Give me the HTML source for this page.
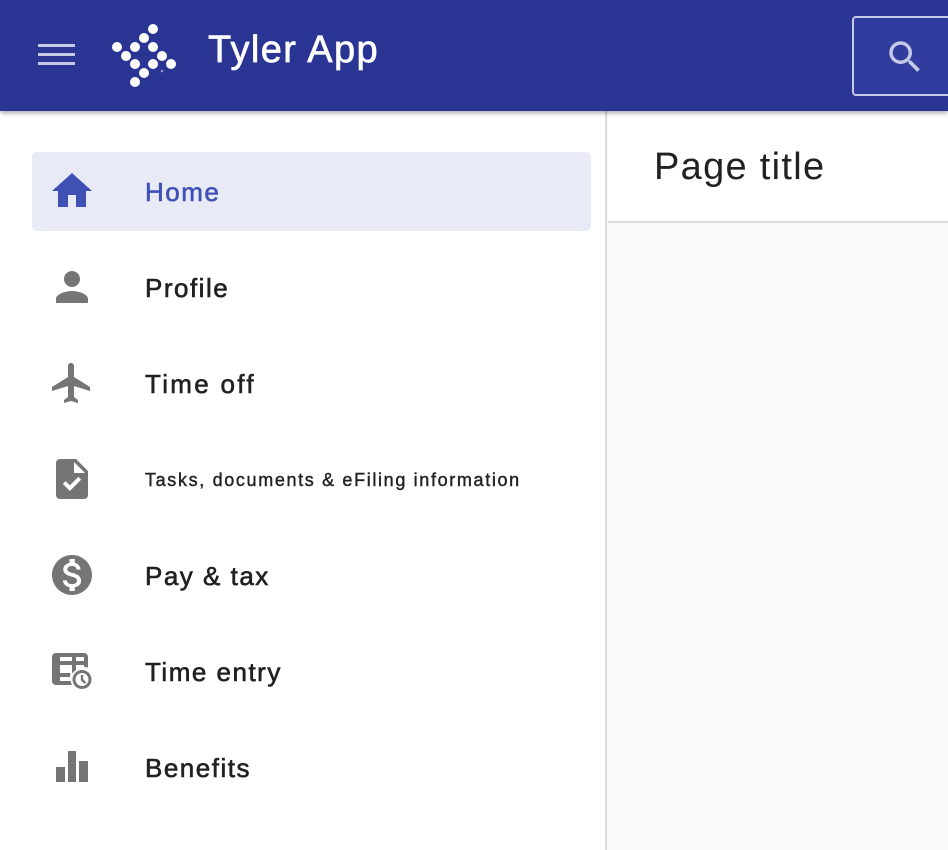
<!DOCTYPE html>
<html><head><meta charset="utf-8"><style>
*{margin:0;padding:0;box-sizing:border-box}
body{width:948px;height:850px;overflow:hidden;background:#fafafa;font-family:"Liberation Sans",Arial,sans-serif;position:relative}
.hdr{position:absolute;left:0;top:0;width:948px;height:111px;background:#2a3593;box-shadow:0 2px 5px rgba(0,0,0,.35);z-index:2}
.side{position:absolute;left:0;top:111px;width:607px;height:739px;background:#fff;border-right:2px solid #dcdcdc}
.main{position:absolute;left:608px;top:111px;width:340px;height:112px;background:#fff;border-bottom:2px solid #dcdcdc}
.item{position:absolute;left:32px;width:559px;height:79px;border-radius:5px}
.item svg{position:absolute;left:16px;top:15px;width:48px;height:48px;fill:#757575}
.item span{position:absolute;left:113px;top:50%;transform:translateY(-48%);font-size:26px;color:#212121;letter-spacing:1.5px;white-space:nowrap;-webkit-text-stroke:0.6px #212121}
.sel{background:#e8eaf6}
.sel svg{fill:#3f51b5}
.sel span{color:#3f51b5;-webkit-text-stroke-color:#3f51b5}
</style></head><body>
<div class="hdr">
  <svg style="position:absolute;left:38px;top:44px" width="37" height="22"><rect y="0" width="37" height="3" fill="#c5c9e6"/><rect y="9" width="37" height="3" fill="#c5c9e6"/><rect y="18" width="37" height="3" fill="#c5c9e6"/></svg>
  <svg style="position:absolute;left:0;top:0" width="200" height="111" fill="#fff">
    <circle cx="153" cy="29" r="5"/><circle cx="144" cy="38" r="5"/><circle cx="153" cy="47" r="5"/><circle cx="135" cy="47" r="5"/><circle cx="117" cy="47" r="5"/><circle cx="126" cy="56" r="5"/><circle cx="162" cy="56" r="5"/><circle cx="135" cy="64" r="5"/><circle cx="153" cy="64" r="5"/><circle cx="171" cy="64" r="5"/><circle cx="144" cy="73" r="5"/><circle cx="135" cy="82" r="5"/><circle cx="162" cy="71" r="1.3" fill="#8e95c9"/>
  </svg>
  <div style="position:absolute;left:208px;top:29px;color:#fff;font-size:38px;letter-spacing:1.4px;-webkit-text-stroke:0.7px #fff">Tyler App</div>
  <div style="position:absolute;left:852px;top:16px;width:120px;height:80px;background:#313d9e;border:2px solid #c5c9e6;border-radius:4px">
    <svg style="position:absolute;left:30px;top:18px" width="42" height="42" viewBox="0 0 24 24" fill="#c5c9e6"><path d="M15.5 14h-.79l-.28-.27A6.47 6.47 0 0 0 16 9.5 6.5 6.5 0 1 0 9.5 16c1.61 0 3.09-.59 4.23-1.57l.27.28v.79l5 4.99L20.49 19l-4.99-5zm-6 0C7.01 14 5 11.99 5 9.5S7.01 5 9.5 5 14 7.01 14 9.5 11.99 14 9.5 14z"/></svg>
  </div>
</div>
<div class="side">
  <div class="item sel" style="top:41px"><svg viewBox="0 0 24 24"><path d="M10 20v-6h4v6h5v-8h3L12 3 2 12h3v8z"/></svg><span>Home</span></div>
  <div class="item" style="top:137px"><svg viewBox="0 0 24 24"><path d="M12 12c2.21 0 4-1.79 4-4s-1.79-4-4-4-4 1.79-4 4 1.79 4 4 4zm0 2c-2.67 0-8 1.34-8 4v2h16v-2c0-2.66-5.33-4-8-4z"/></svg><span>Profile</span></div>
  <div class="item" style="top:233px"><svg viewBox="0 0 24 24"><path d="M21 16v-2l-8-5V3.5c0-.83-.67-1.5-1.5-1.5S10 2.67 10 3.5V9l-8 5v2l8-2.5V19l-2 1.5V22l3.5-1 3.5 1v-1.5L13 19v-5.5l8 2.5z"/></svg><span style="letter-spacing:2.3px">Time off</span></div>
  <div class="item" style="top:329px"><svg viewBox="0 0 24 24"><path d="M14 2H6c-1.1 0-2 .9-2 2v16c0 1.1.9 2 2 2h12c1.1 0 2-.9 2-2V8l-6-6zm-3.06 16L7.4 14.46l1.41-1.41 2.12 2.12 4.24-4.24 1.41 1.41L10.94 18zM13 9V3.5L18.5 9H13z"/></svg><span style="font-size:18px;letter-spacing:1.65px;-webkit-text-stroke:0.4px #212121">Tasks, documents &amp; eFiling information</span></div>
  <div class="item" style="top:425px"><svg viewBox="0 0 24 24"><path d="M12 2C6.48 2 2 6.48 2 12s4.48 10 10 10 10-4.48 10-10S17.52 2 12 2zm1.41 16.09V20h-2.67v-1.93c-1.71-.36-3.16-1.46-3.27-3.4h1.96c.1 1.05.82 1.87 2.65 1.87 1.96 0 2.4-.98 2.4-1.59 0-.83-.44-1.61-2.67-2.14-2.48-.6-4.18-1.62-4.18-3.67 0-1.72 1.39-2.84 3.11-3.21V4h2.67v1.95c1.86.45 2.79 1.86 2.85 3.39H14.3c-.05-1.11-.64-1.87-2.22-1.87-1.5 0-2.4.68-2.4 1.64 0 .84.65 1.39 2.67 1.91s4.18 1.39 4.18 3.91c-.01 1.83-1.38 2.83-3.12 3.16z"/></svg><span>Pay &amp; tax</span></div>
  <div class="item" style="top:521px"><svg viewBox="0 0 24 24"><path d="M4 3h14a2 2 0 0 1 2 2v5.3a6 6 0 0 0-2-.3V9h-4v2.5a6 6 0 0 0-1.6 1.5H12V9H6v4h5.3a6 6 0 0 0-.3 2H6v2h5.3c.1.7.4 1.4.8 2H4a2 2 0 0 1-2-2V5a2 2 0 0 1 2-2zm2 2v2h6V5zm8 0v2h4V5zM17 11.5a4.75 4.75 0 1 1 0 9.5 4.75 4.75 0 0 1 0-9.5zm0 1.5a3.25 3.25 0 1 0 0 6.5 3.25 3.25 0 0 0 0-6.5zm-.6 1h1.2v2.1l1.5 1.5-.85.85-1.85-1.85z"/></svg><span>Time entry</span></div>
  <div class="item" style="top:617px"><svg viewBox="0 0 48 48"><path d="M8 24h9v15H8zM20 8h8v31h-8zM31 18h9v21h-9z"/></svg><span>Benefits</span></div>
</div>
<div class="main"><div style="position:absolute;left:46px;top:35px;font-size:38px;color:#212121;letter-spacing:1.3px">Page title</div></div>
</body></html>
